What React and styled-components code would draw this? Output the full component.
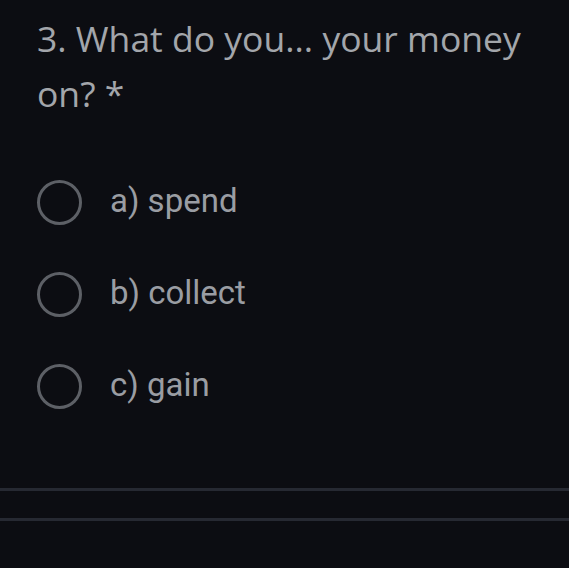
import styled, { createGlobalStyle } from "styled-components";

const GlobalStyle = createGlobalStyle`
  html, body {
    margin: 0;
    padding: 0;
    background: #0c0d12;
  }
`;

const Page = styled.div`
  width: 569px;
  height: 568px;
  background: #0c0d12;
  overflow: hidden;
  font-family: "Roboto", "Liberation Sans", sans-serif;
  color: #9c9fa5;
`;

const Question = styled.div`
  padding: 11px 20px 0 37px;
  font-family: "Open Sans", "Roboto", sans-serif;
  font-size: 35.5px;
  line-height: 55px;
  color: #a3a6ab;
`;

const Options = styled.div`
  display: flex;
  flex-direction: column;
  gap: 48px;
  padding: 59px 0 0 37px;
`;

const Option = styled.label`
  display: flex;
  align-items: center;
  gap: 28px;
  height: 44px;
`;

const Radio = styled.span`
  box-sizing: border-box;
  width: 45px;
  height: 45px;
  border-radius: 50%;
  border: 3px solid #5d6066;
  flex-shrink: 0;
`;

const OptionText = styled.span`
  font-size: 33px;
  color: #9a9da3;
  position: relative;
  top: -2px;
`;

const Footer = styled.div`
  margin-top: 80px;
  display: flex;
  flex-direction: column;
  gap: 27px;
`;

const Rule = styled.div`
  height: 3px;
  background: #262932;
`;

const options = ["a) spend", "b) collect", "c) gain"];

export default function App() {
  return (
    <Page>
      <GlobalStyle />
      <Question>3. What do you... your money on? *</Question>
      <Options>
        {options.map((o) => (
          <Option key={o}>
            <Radio />
            <OptionText>{o}</OptionText>
          </Option>
        ))}
      </Options>
      <Footer>
        <Rule />
        <Rule />
      </Footer>
    </Page>
  );
}
